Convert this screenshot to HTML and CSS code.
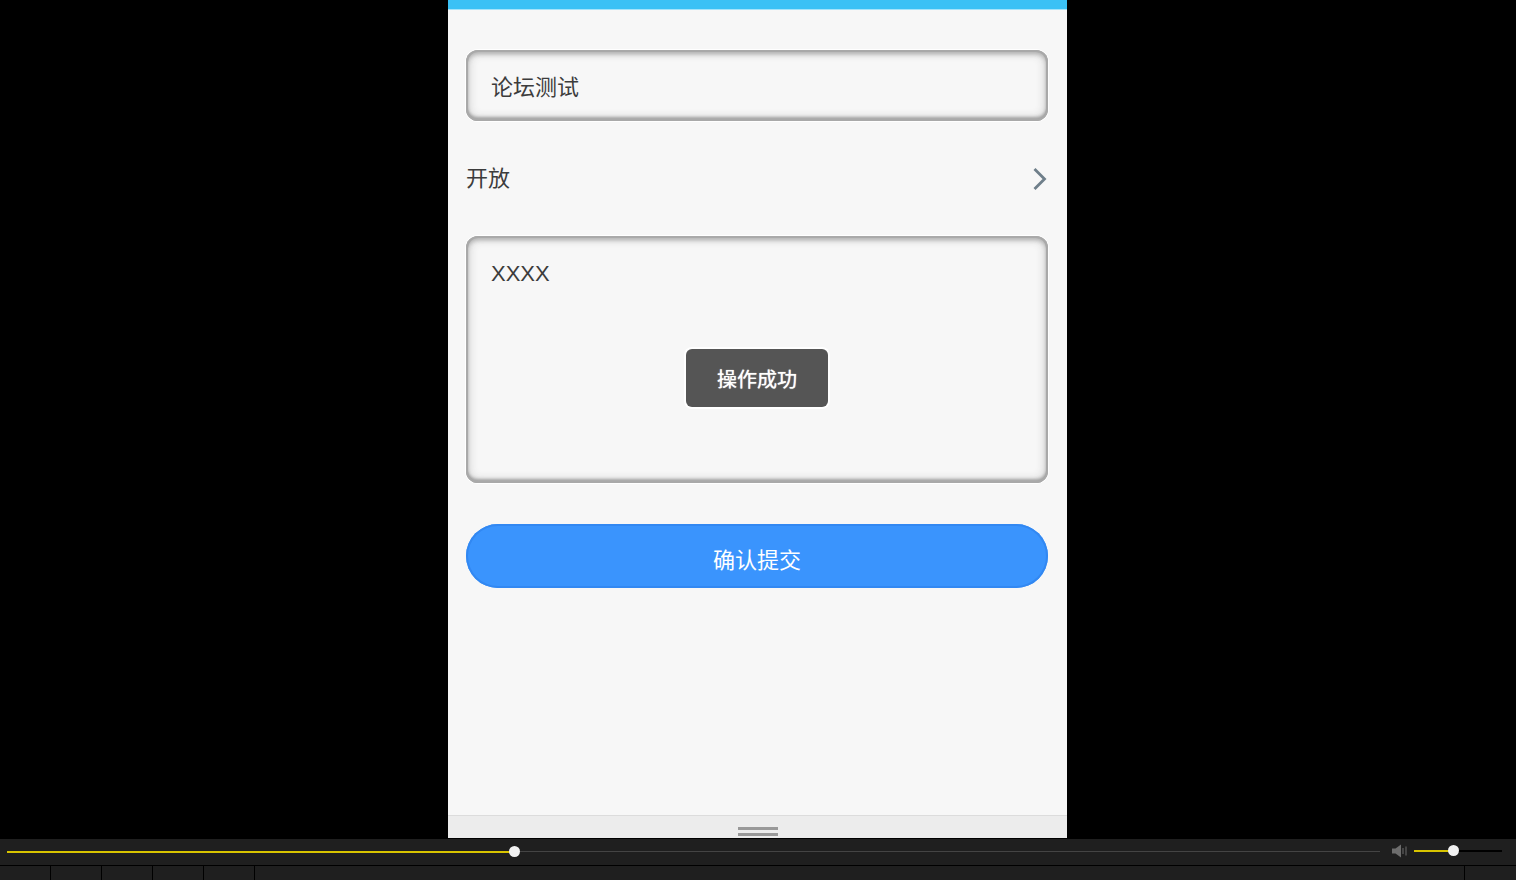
FILE: index.html
```html
<!DOCTYPE html>
<html lang="zh-CN">
<head>
    <meta charset="UTF-8">
    <meta name="viewport" content="width=device-width, initial-scale=1.0">
    <title>论坛测试</title>
    <link rel="stylesheet" href="styles.css">
</head>
<body>
    <div class="stage">
        <div class="phone">
            <div class="top-bar"></div>

            <form class="form">
                <div class="field field-name">论坛测试</div>

                <div class="select-row">
                    <span class="select-label">开放</span>
                    <svg class="chevron" width="16" height="24" viewBox="0 0 16 24">
                        <path d="M2.5 2 L12.5 12 L2.5 22" fill="none" stroke="#6f7f8a" stroke-width="2.8"/>
                    </svg>
                </div>

                <div class="field field-content">XXXX</div>

                <div class="submit">确认提交</div>
            </form>

            <div class="toast">操作成功</div>

            <div class="handle-bar">
                <div class="handle"></div>
            </div>
        </div>
    </div>

    <div class="player">
        <div class="progress">
            <div class="progress-done"></div>
            <div class="knob"></div>
        </div>
        <svg class="speaker" width="16" height="14" viewBox="0 0 16 14">
            <path d="M0 4.5 H3.5 L9 0.5 V13.5 L3.5 9.5 H0 Z" fill="#6d6d6d"/>
            <path d="M11 4 V10 M14 2.5 V11.5" stroke="#6d6d6d" stroke-width="1" fill="none"/>
        </svg>
        <div class="volume">
            <div class="volume-done"></div>
            <div class="knob"></div>
        </div>
    </div>

    <div class="tabs">
        <div class="tab"></div>
        <div class="tab"></div>
        <div class="tab"></div>
        <div class="tab"></div>
        <div class="tab"></div>
        <div class="tab tab-wide"></div>
        <div class="tab tab-end"></div>
    </div>
</body>
</html>
```

FILE: styles.css
```css
body {
    margin: 0;
    height: 880px;
    overflow: hidden;
    background-color: #000;
    font-family: "Liberation Sans", "Noto Sans CJK SC", sans-serif;
    display: flex;
    flex-direction: column;
}

.stage {
    height: 838px;
    display: flex;
    justify-content: center;
    padding-right: 1px;
    flex-shrink: 0;
}

.phone {
    position: relative;
    width: 619px;
    background-color: #f7f7f7;
    display: flex;
    flex-direction: column;
}

.top-bar {
    height: 9px;
    background-color: #3bc1f5;
    border-bottom: 1px solid #a5e4fb;
}

.form {
    flex: 1;
    padding: 40px 19px 0 18px;
    display: flex;
    flex-direction: column;
}

.field {
    box-sizing: border-box;
    border-radius: 12px;
    background-color: #f7f7f7;
    box-shadow: 0 0 0 1px #fff, inset 0 0 0 2px #a9a9a9, inset 0 -3px 3px 1px #a4a4a4, inset 0 3px 4px 1px #b0b0b0, inset 0 0 9px 4px #d6d6d6;
    padding-left: 25px;
    font-size: 22px;
    color: #3c3c3c;
}

.field-name {
    height: 71px;
    line-height: 75px;
}

.select-row {
    height: 115px;
    display: flex;
    align-items: center;
    justify-content: space-between;
    font-size: 22px;
    color: #3c3c3c;
}

.select-label {
    margin-top: -6px;
}

.field-content {
    height: 247px;
    padding-top: 23px;
    line-height: 30px;
}

.submit {
    margin-top: 41px;
    height: 64px;
    line-height: 74px;
    border-radius: 32px;
    background-color: #3a94fd;
    box-shadow: inset 0 0 0 2px #3288f2;
    text-align: center;
    font-size: 22px;
    color: #fff;
}

.toast {
    position: absolute;
    left: 238px;
    top: 349px;
    width: 142px;
    height: 58px;
    line-height: 62px;
    border-radius: 6px;
    background-color: #555;
    box-shadow: 0 0 0 2px #fff;
    text-align: center;
    font-size: 20px;
    text-shadow: 0 0 1px #fff;
    color: #fff;
}

.handle-bar {
    height: 23px;
    box-sizing: border-box;
    background-color: #ececec;
    border-top: 1px solid #dcdcdc;
    display: flex;
    justify-content: center;
    padding-top: 11px;
}

.handle {
    width: 40px;
    height: 3px;
    border-top: 3px solid #999;
    border-bottom: 3px solid #999;
}

.player {
    margin-top: 1px;
    height: 26px;
    flex-shrink: 0;
    background-color: #1f1f1f;
    display: flex;
    align-items: center;
    padding: 0 14px 2px 7px;
    box-sizing: border-box;
}

.progress {
    position: relative;
    width: 1373px;
    height: 1px;
    background-color: #444;
}

.progress-done {
    width: 507px;
    height: 2px;
    background-color: #d8c400;
}

.speaker {
    margin-left: 12px;
}

.volume {
    position: relative;
    width: 88px;
    height: 2px;
    margin-left: 6px;
    background-color: #000;
}

.volume-done {
    width: 39px;
    height: 2px;
    background-color: #d8c400;
}

.knob {
    position: absolute;
    top: -5px;
    width: 11px;
    height: 11px;
    border-radius: 50%;
    background-color: #f2f2f2;
}

.progress .knob {
    left: 502px;
}

.volume .knob {
    left: 34px;
}

.tabs {
    flex: 1;
    display: flex;
    background-color: #000;
    padding-top: 1px;
}

.tab {
    width: 50px;
    margin-right: 1px;
    background-color: #1f1f1f;
}

.tab-wide {
    width: auto;
    flex: 1;
}

.tab-end {
    margin-right: 0;
    width: 51px;
}
```
